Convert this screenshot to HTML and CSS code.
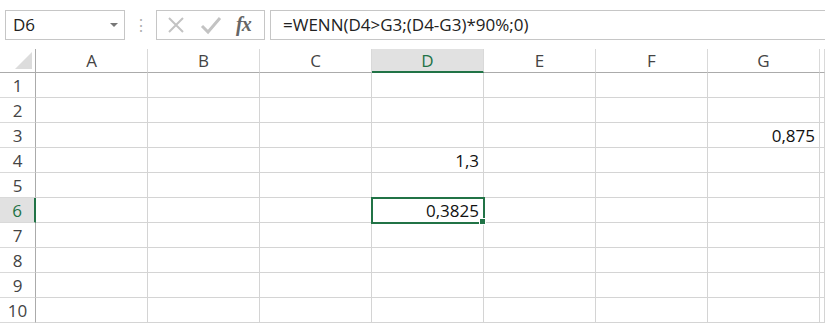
FILE: index.html
```html
<!DOCTYPE html>
<html lang="de">
<head>
    <meta charset="UTF-8">
    <title>Mappe1</title>
    <link rel="stylesheet" href="styles.css">
</head>
<body>

    <div class="leiste">
        <div class="namenfeld">
            <span>D6</span>
            <span class="pfeil"></span>
        </div>
        <div class="punkte">&#8942;</div>
        <div class="knoepfe">
            <svg class="symbol" width="20" height="20" viewBox="0 0 20 20">
                <path d="M3 3 L17 17 M17 3 L3 17" stroke="#c3c3c3" stroke-width="2" fill="none"/>
            </svg>
            <svg class="symbol" width="22" height="20" viewBox="0 0 22 20">
                <path d="M2 11 L8 17 L20 3" stroke="#c3c3c3" stroke-width="3" fill="none"/>
            </svg>
            <span class="fx">fx</span>
        </div>
        <div class="formel">=WENN(D4&gt;G3;(D4-G3)*90%;0)</div>
    </div>

    <div class="tabelle">
        <div class="ecke"><span class="dreieck"></span></div>
        <div class="kopf">A</div>
        <div class="kopf">B</div>
        <div class="kopf">C</div>
        <div class="kopf aktiv">D</div>
        <div class="kopf">E</div>
        <div class="kopf">F</div>
        <div class="kopf">G</div>
        <div class="kopf"></div>

        <div class="zeile">1</div>
        <div class="zelle"></div><div class="zelle"></div><div class="zelle"></div><div class="zelle"></div><div class="zelle"></div><div class="zelle"></div><div class="zelle"></div><div class="zelle"></div>

        <div class="zeile">2</div>
        <div class="zelle"></div><div class="zelle"></div><div class="zelle"></div><div class="zelle"></div><div class="zelle"></div><div class="zelle"></div><div class="zelle"></div><div class="zelle"></div>

        <div class="zeile">3</div>
        <div class="zelle"></div><div class="zelle"></div><div class="zelle"></div><div class="zelle"></div><div class="zelle"></div><div class="zelle"></div><div class="zelle">0,875</div><div class="zelle"></div>

        <div class="zeile">4</div>
        <div class="zelle"></div><div class="zelle"></div><div class="zelle"></div><div class="zelle">1,3</div><div class="zelle"></div><div class="zelle"></div><div class="zelle"></div><div class="zelle"></div>

        <div class="zeile">5</div>
        <div class="zelle"></div><div class="zelle"></div><div class="zelle"></div><div class="zelle"></div><div class="zelle"></div><div class="zelle"></div><div class="zelle"></div><div class="zelle"></div>

        <div class="zeile aktiv">6</div>
        <div class="zelle"></div><div class="zelle"></div><div class="zelle"></div><div class="zelle gewaehlt">0,3825</div><div class="zelle"></div><div class="zelle"></div><div class="zelle"></div><div class="zelle"></div>

        <div class="zeile">7</div>
        <div class="zelle"></div><div class="zelle"></div><div class="zelle"></div><div class="zelle"></div><div class="zelle"></div><div class="zelle"></div><div class="zelle"></div><div class="zelle"></div>

        <div class="zeile">8</div>
        <div class="zelle"></div><div class="zelle"></div><div class="zelle"></div><div class="zelle"></div><div class="zelle"></div><div class="zelle"></div><div class="zelle"></div><div class="zelle"></div>

        <div class="zeile">9</div>
        <div class="zelle"></div><div class="zelle"></div><div class="zelle"></div><div class="zelle"></div><div class="zelle"></div><div class="zelle"></div><div class="zelle"></div><div class="zelle"></div>

        <div class="zeile">10</div>
        <div class="zelle"></div><div class="zelle"></div><div class="zelle"></div><div class="zelle"></div><div class="zelle"></div><div class="zelle"></div><div class="zelle"></div><div class="zelle"></div>
    </div>

</body>
</html>
```

FILE: styles.css
```css
body {
    margin: 0;
    padding: 0;
    background-color: #fff;
    font-family: 'Open Sans', sans-serif;
    color: #222;
    overflow: hidden;
}

/* Bearbeitungsleiste oben */
.leiste {
    display: flex;
    align-items: center;
    height: 49px;
    padding-left: 5px;
    box-sizing: border-box;
}

.namenfeld {
    display: flex;
    align-items: center;
    justify-content: space-between;
    width: 120px;
    height: 30px;
    border: 1px solid #c6c6c6;
    box-sizing: border-box;
    padding: 0 6px 0 7px;
    font-size: 17px;
    color: #222;
}

.pfeil {
    width: 0;
    height: 0;
    border-left: 4px solid transparent;
    border-right: 4px solid transparent;
    border-top: 4px solid #777;
}

.punkte {
    width: 31px;
    text-align: center;
    color: #b0b0b0;
    font-size: 16px;
}

.knoepfe {
    display: flex;
    align-items: center;
    gap: 14px;
    width: 109px;
    height: 30px;
    border: 1px solid #c6c6c6;
    box-sizing: border-box;
    padding-left: 9px;
}

.fx {
    font-family: 'Liberation Serif', serif;
    font-style: italic;
    font-weight: bold;
    font-size: 20px;
    color: #666;
    letter-spacing: -1px;
}

.formel {
    flex: 1;
    height: 30px;
    margin-left: 5px;
    border: 1px solid #c6c6c6;
    border-right: none;
    box-sizing: border-box;
    padding-left: 12px;
    line-height: 28px;
    font-size: 17px;
    color: #222;
}

/* Tabellenblatt */
.tabelle {
    display: grid;
    grid-template-columns: 36px repeat(7, 112px) 1fr;
    grid-template-rows: 24px repeat(10, 25px);
    font-size: 17px;
}

.ecke {
    display: flex;
    align-items: flex-end;
    justify-content: flex-end;
    border-right: 1px solid #ababab;
    border-bottom: 1px solid #ababab;
    padding: 0 3px 3px 0;
}

.dreieck {
    width: 0;
    height: 0;
    border-left: 17px solid transparent;
    border-bottom: 17px solid #dcdcdc;
}

.kopf {
    display: flex;
    align-items: center;
    justify-content: center;
    border-right: 1px solid #d9d9d9;
    border-bottom: 1px solid #ababab;
    color: #444;
}

.kopf.aktiv {
    background-color: #e1e1e1;
    color: #217346;
    border-bottom: 2px solid #217346;
}

.zeile {
    display: flex;
    align-items: center;
    justify-content: center;
    border-right: 1px solid #ababab;
    border-bottom: 1px solid #d9d9d9;
    color: #444;
}

.zeile.aktiv {
    background-color: #e1e1e1;
    color: #217346;
    border-right: 2px solid #217346;
}

.zelle {
    display: flex;
    align-items: flex-end;
    justify-content: flex-end;
    padding: 0 4px 0 0;
    border-right: 1px solid #d4d4d4;
    border-bottom: 1px solid #d4d4d4;
    color: #111;
}

.zelle.gewaehlt {
    position: relative;
    outline: 2px solid #217346;
    outline-offset: -1px;
}

/* Ausfuellkaestchen unten rechts */
.zelle.gewaehlt::after {
    content: '';
    position: absolute;
    right: -3px;
    bottom: -3px;
    width: 5px;
    height: 5px;
    background-color: #217346;
    border: 1px solid #fff;
}
```
